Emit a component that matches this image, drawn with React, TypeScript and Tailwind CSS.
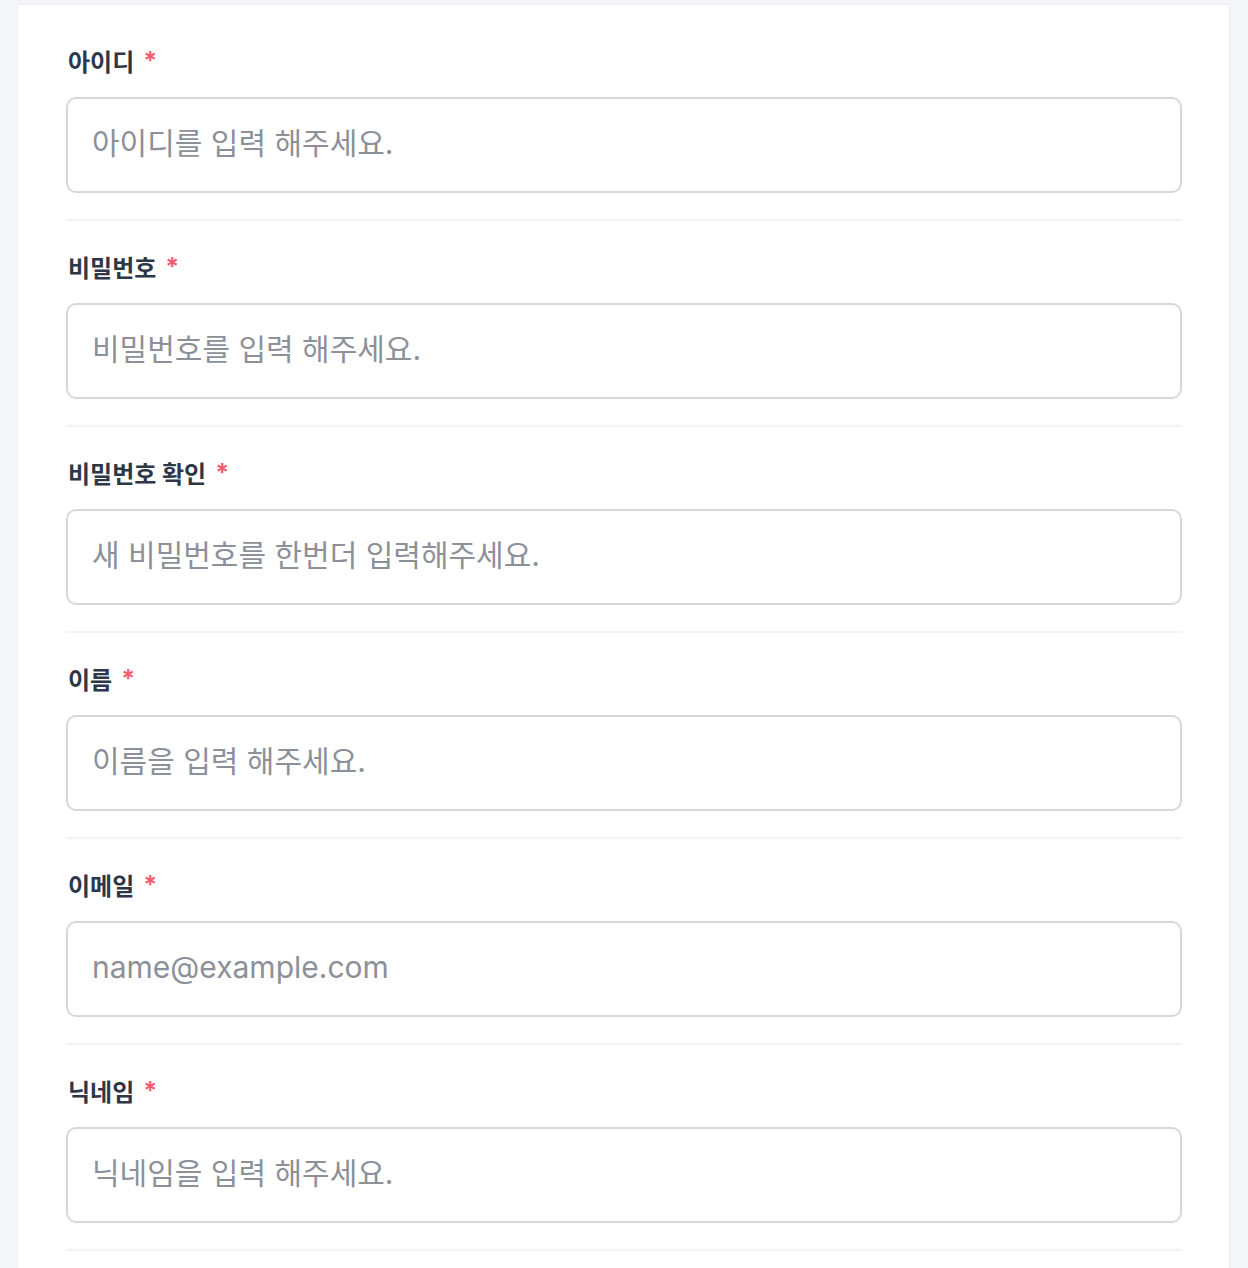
const FIELDS = [
  { label: "아이디", placeholder: "아이디를 입력 해주세요.", type: "text" },
  { label: "비밀번호", placeholder: "비밀번호를 입력 해주세요.", type: "password" },
  { label: "비밀번호 확인", placeholder: "새 비밀번호를 한번더 입력해주세요.", type: "password" },
  { label: "이름", placeholder: "이름을 입력 해주세요.", type: "text" },
  { label: "이메일", placeholder: "name@example.com", type: "email" },
  { label: "닉네임", placeholder: "닉네임을 입력 해주세요.", type: "text" },
];

export default function App() {
  return (
    <div
      className="min-h-[1268px] bg-[#f5f6fa] pl-[17px] pr-[18px] pt-[3px]"
      style={{ fontFamily: '"Inter", "Noto Sans CJK KR", sans-serif' }}
    >
      <form className="min-h-[1265px] border-x border-t-2 border-[#edf0f5] bg-white pl-[48px] pr-[47px] pt-[10px]">
        {FIELDS.map((f) => (
          <div key={f.label} className="border-b-2 border-[#f0f3f7] pb-[26px] pt-[32px]">
            <label className="flex h-[32px] items-center gap-[9px] pl-[2px] text-[24px] font-bold leading-[32px] text-[#2d3748]">
              <span>{f.label}</span>
              <span className="-mt-[5px] text-[25px] font-bold text-[#f25c73]">*</span>
            </label>
            <input
              type={f.type}
              placeholder={f.placeholder}
              className="mt-[18px] block h-[96px] w-full rounded-[10px] border-2 border-[#d5d9df] bg-white px-6 pb-1 text-[30px] text-[#2d3748] outline-none placeholder:text-[#8c9098]"
            />
          </div>
        ))}
      </form>
    </div>
  );
}
